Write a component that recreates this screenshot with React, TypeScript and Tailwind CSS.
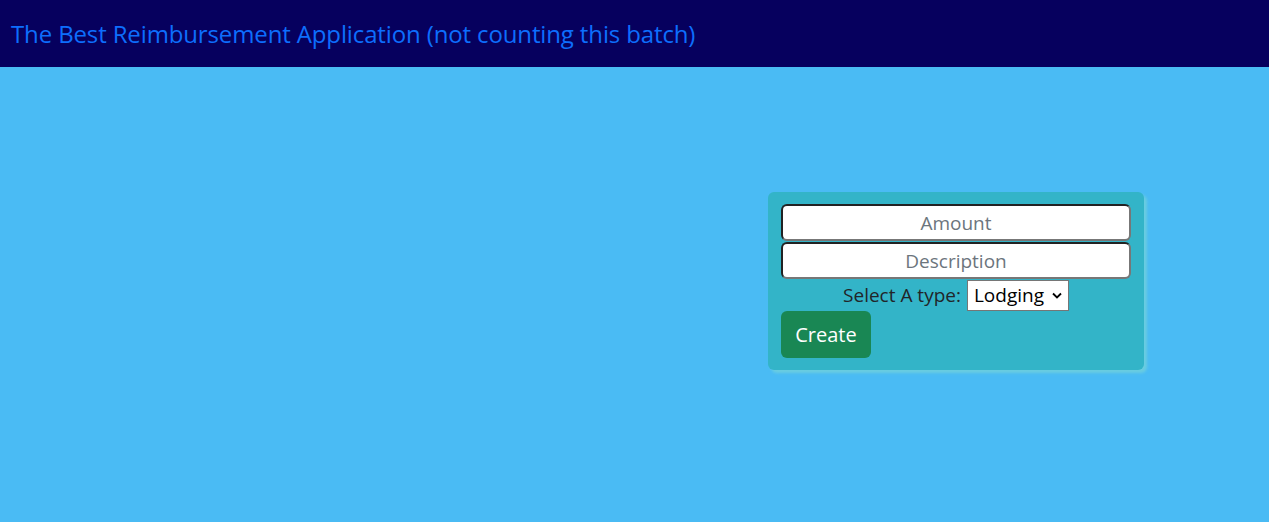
import { useState } from "react";

const font = { fontFamily: '"Segoe UI", "Open Sans", "Noto Sans", sans-serif' };

const App = () => {
  const [amount, setAmount] = useState("");
  const [description, setDescription] = useState("");
  const [type, setType] = useState("Lodging");

  return (
    <div className="min-h-[522px] bg-[#4abbf4]" style={font}>
      <nav className="flex h-[67px] items-center bg-[#06005e] px-[11px]">
        <h4 className="text-[24px] leading-none text-[#0d6efd] tracking-[-0.13px]">
          The Best Reimbursement Application (not counting this batch)
        </h4>
      </nav>

      <div className="flex justify-end pr-[125px] pt-[125px]">
        <div className="w-[376px] rounded-[6px] bg-[#33b4c8] px-[13px] pt-[12px] pb-[12px] shadow-[3px_3px_3px_#6acde0]">
          <input
            value={amount}
            onChange={(e) => setAmount(e.target.value)}
            placeholder="Amount"
            className="block h-[37px] w-full rounded-[6px] border-2 border-t-[#222] border-l-[#222] border-r-[#777] border-b-[#777] bg-white pt-px text-center text-[19px] text-[#212529] placeholder:text-[#6c757d] outline-none"
          />
          <input
            value={description}
            onChange={(e) => setDescription(e.target.value)}
            placeholder="Description"
            className="mt-px block h-[37px] w-full rounded-[6px] border-2 border-t-[#222] border-l-[#222] border-r-[#777] border-b-[#777] bg-white text-center text-[19px] text-[#212529] placeholder:text-[#6c757d] outline-none"
          />
          <div className="flex h-[32px] items-center justify-center gap-[6px] text-[19px] text-[#212529]">
            <label htmlFor="type">Select A type:</label>
            <div className="relative">
              <select
                id="type"
                value={type}
                onChange={(e) => setType(e.target.value)}
                className="h-[31px] w-[102px] appearance-none border border-[#767676] bg-white pl-[6px] text-[19px] text-black outline-none"
              >
                <option>Lodging</option>
                <option>Travel</option>
                <option>Food</option>
                <option>Other</option>
              </select>
              <svg
                className="pointer-events-none absolute right-[7px] top-[12px]"
                width="10"
                height="7"
                viewBox="0 0 10 7"
                fill="none"
              >
                <path d="M1 1.5 L5 5.5 L9 1.5" stroke="#000" strokeWidth="1.8" />
              </svg>
            </div>
          </div>
          <button className="block h-[47px] w-[90px] rounded-[6px] bg-[#198754] text-[20px] text-white">
            Create
          </button>
        </div>
      </div>
    </div>
  );
};

export default App;
